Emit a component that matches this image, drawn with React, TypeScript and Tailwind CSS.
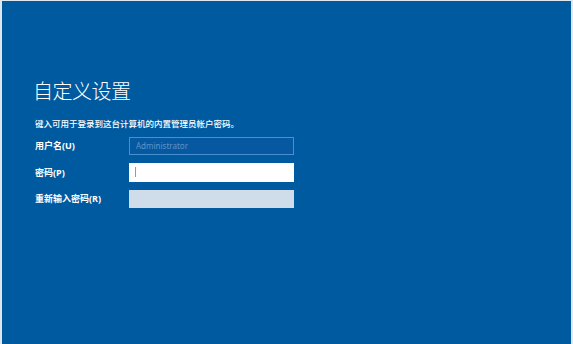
const FONT = "font-['Noto_Sans','Noto_Sans_CJK_SC',sans-serif]";

const FIELDS = [
  { label: "用户名(U)", kind: "user" },
  { label: "密码(P)", kind: "password" },
  { label: "重新输入密码(R)", kind: "confirm" },
];

function Field({ kind }: { kind: string }) {
  if (kind === "user") {
    return (
      <div className="flex h-[18px] w-[165px] items-center border border-[#4a8fcf] bg-[#0658a0] pl-[6px] text-[8px] text-[#5f95c9]">
        Administrator
      </div>
    );
  }
  if (kind === "password") {
    return (
      <div className="flex h-[19px] w-[165px] items-center bg-white pl-[6px]">
        <span className="h-[10px] w-px bg-[#9a9a9a]" />
      </div>
    );
  }
  return <div className="h-[18px] w-[165px] bg-[#cfdcea]" />;
}

export default function App() {
  return (
    <div
      className={`${FONT} h-[344px] w-[573px] overflow-hidden border-t border-l-2 border-r-2 border-[#dfe7ee] bg-[#005a9f] text-white`}
    >
      <div className="pl-[33px] pt-[81px]">
        <h1 className="-ml-[2px] text-[20px] font-light leading-none tracking-[-0.5px]">自定义设置</h1>
        <p className="mt-[18px] text-[8.5px] font-medium leading-none">
          键入可用于登录到这台计算机的内置管理员帐户密码。
        </p>

        <div className="mt-[8px] flex flex-col gap-[8px]">
          {FIELDS.map((f) => (
            <div key={f.kind} className="flex items-center">
              <span className="w-[94px] text-[9px] font-bold leading-none">{f.label}</span>
              <Field kind={f.kind} />
            </div>
          ))}
        </div>
      </div>
    </div>
  );
}
